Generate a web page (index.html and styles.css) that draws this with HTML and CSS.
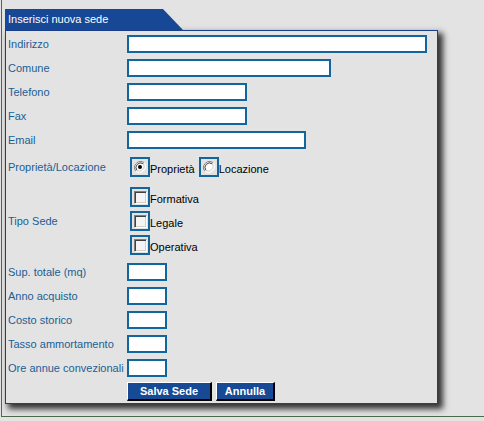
FILE: index.html
```html
<!DOCTYPE html>
<html lang="it">
<head>
<meta charset="utf-8">
<title>Inserisci nuova sede</title>
<link rel="stylesheet" href="styles.css">
</head>
<body>
<div class="frame">
  <div class="tab">Inserisci nuova sede</div>
  <div class="panel">
    <div class="row"><span class="lbl">Indirizzo</span><span class="field"><input class="txt w300" type="text"></span></div>
    <div class="row"><span class="lbl">Comune</span><span class="field"><input class="txt w204" type="text"></span></div>
    <div class="row"><span class="lbl">Telefono</span><span class="field"><input class="txt w120" type="text"></span></div>
    <div class="row"><span class="lbl">Fax</span><span class="field"><input class="txt w120" type="text"></span></div>
    <div class="row"><span class="lbl">Email</span><span class="field"><input class="txt w179" type="text"></span></div>
    <div class="row row-radio"><span class="lbl">Proprietà/Locazione</span>
      <span class="field opts">
        <span class="opt"><span class="box"><svg class="radio" width="12" height="12" viewBox="0 0 12 12"><path d="M10.2 1.8A6 6 0 0 0 1.8 10.2" fill="none" stroke="#808080" stroke-width="1"/><path d="M1.8 10.2A6 6 0 0 0 10.2 1.8" fill="none" stroke="#ffffff" stroke-width="1"/><circle cx="6" cy="6" r="4.6" fill="#ffffff"/><path d="M9.2 2.8A4.6 4.6 0 0 0 2.8 9.2" fill="none" stroke="#404040" stroke-width="1"/><path d="M2.8 9.2A4.6 4.6 0 0 0 9.2 2.8" fill="none" stroke="#d4d0c8" stroke-width="1"/><circle cx="6" cy="6" r="2" fill="#000"/></svg></span><span class="optlbl">Proprietà</span></span>
        <span class="opt"><span class="box"><svg class="radio" width="12" height="12" viewBox="0 0 12 12"><path d="M10.2 1.8A6 6 0 0 0 1.8 10.2" fill="none" stroke="#808080" stroke-width="1"/><path d="M1.8 10.2A6 6 0 0 0 10.2 1.8" fill="none" stroke="#ffffff" stroke-width="1"/><circle cx="6" cy="6" r="4.6" fill="#ffffff"/><path d="M9.2 2.8A4.6 4.6 0 0 0 2.8 9.2" fill="none" stroke="#404040" stroke-width="1"/><path d="M2.8 9.2A4.6 4.6 0 0 0 9.2 2.8" fill="none" stroke="#d4d0c8" stroke-width="1"/></svg></span><span class="optlbl">Locazione</span></span>
      </span>
    </div>
    <div class="row row-tipo"><span class="lbl">Tipo Sede</span>
      <span class="field checks">
        <span class="opt"><span class="box"><span class="chk"></span></span><span class="optlbl">Formativa</span></span>
        <span class="opt"><span class="box"><span class="chk"></span></span><span class="optlbl">Legale</span></span>
        <span class="opt"><span class="box"><span class="chk"></span></span><span class="optlbl">Operativa</span></span>
      </span>
    </div>
    <div class="row"><span class="lbl">Sup. totale (mq)</span><span class="field"><input class="txt w40" type="text"></span></div>
    <div class="row"><span class="lbl">Anno acquisto</span><span class="field"><input class="txt w40" type="text"></span></div>
    <div class="row"><span class="lbl">Costo storico</span><span class="field"><input class="txt w40" type="text"></span></div>
    <div class="row"><span class="lbl">Tasso ammortamento</span><span class="field"><input class="txt w40" type="text"></span></div>
    <div class="row"><span class="lbl">Ore annue convezionali</span><span class="field"><input class="txt w40" type="text"></span></div>
    <div class="row row-btn"><span class="lbl"></span><span class="field btns"><button class="btn w85" type="button">Salva Sede</button><button class="btn w59" type="button">Annulla</button></span></div>
  </div>
</div>
</body>
</html>
```

FILE: styles.css
```css
html, body {
  margin: 0;
  padding: 0;
  background: #e3e3e3;
  font-family: "Liberation Sans", Arial, sans-serif;
  font-size: 11px;
  overflow: hidden;
}

.frame {
  margin-left: 1px;
  box-sizing: border-box;
  border-left: 1px solid #4a6b4a;
  border-bottom: 1px solid #4a6b4a;
  padding: 9px 0 0 3px;
  height: 417px;
}

.tab {
  width: 178px;
  height: 21px;
  box-sizing: border-box;
  background: #164896;
  color: #ffffff;
  padding: 4px 0 0 3px;
  line-height: 13px;
  clip-path: polygon(0 0, 158px 0, 178px 100%, 0 100%);
}

.panel {
  width: 431px;
  border: 1px solid #1b3f8a;
  background: #e3e3e3;
  padding: 1px 0 0 0;
  box-shadow: 4px 4px 6px 1px #333333;
}

.row {
  display: grid;
  grid-template-columns: 121px 1fr;
  height: 24px;
  align-items: center;
}

.lbl {
  padding-left: 2px;
  color: #1a5e95;
  white-space: nowrap;
  line-height: 13px;
}

.field {
  display: flex;
  align-items: center;
}

.txt {
  box-sizing: border-box;
  height: 18px;
  margin: 0;
  padding: 0 2px;
  border: 2px solid #12659d;
  background: #ffffff;
  font: 11px "Liberation Sans", Arial, sans-serif;
  outline: none;
}

.w300 { width: 300px; }
.w204 { width: 204px; }
.w179 { width: 179px; }
.w120 { width: 120px; }
.w40 { width: 40px; }

.row-radio { height: 30px; }

.row-tipo {
  height: 78px;
}

.checks {
  flex-direction: column;
  align-items: flex-start;
  padding: 3px 0;
}

.checks .opt {
  height: 24px;
  align-items: center;
}

.opt {
  display: flex;
  align-items: flex-end;
  margin-left: 3px;
}

.opts .opt + .opt { margin-left: 4px; }

.box {
  box-sizing: border-box;
  width: 20px;
  height: 20px;
  border: 2px solid #12659d;
  background: #e3e3e3;
  display: flex;
  align-items: center;
  justify-content: center;
}

.chk {
  box-sizing: border-box;
  width: 13px;
  height: 13px;
  background: #f4f4f4;
  border-top: 1px solid #808080;
  border-left: 1px solid #808080;
  border-right: 1px solid #ffffff;
  border-bottom: 1px solid #ffffff;
  box-shadow: inset 1px 1px 0 #404040, inset -1px -1px 0 #d4d0c8;
}

.radio { display: block; }

.optlbl {
  color: #000000;
  line-height: 13px;
}

.opts .optlbl { margin-bottom: 1px; }

.checks .optlbl {
  position: relative;
  top: 2px;
}

.row-btn {
  height: 23px;
  align-items: start;
}

.btns {
  gap: 4px;
  padding-top: 2px;
}

.btn {
  box-sizing: border-box;
  height: 19px;
  margin: 0;
  padding: 0;
  background: #164a95;
  color: #ffffff;
  font: bold 11px "Liberation Sans", Arial, sans-serif;
  border-top: 1px solid #ffffff;
  border-left: 1px solid #ffffff;
  border-right: 2px solid #000000;
  border-bottom: 2px solid #000000;
  cursor: pointer;
}

.w85 { width: 85px; }
.w59 { width: 59px; }
```
